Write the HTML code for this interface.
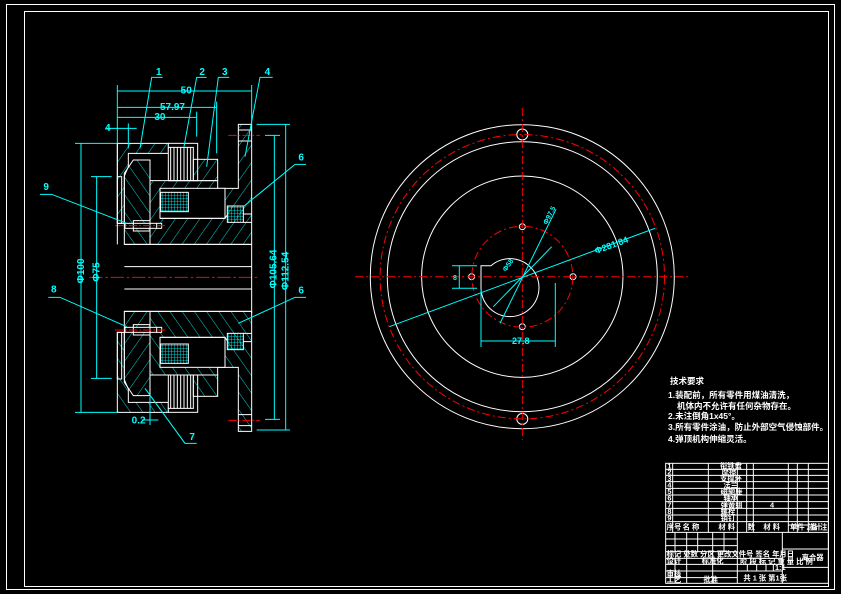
<!DOCTYPE html>
<html><head><meta charset="utf-8"><style>
html,body{margin:0;padding:0;background:#000;}
svg{display:block;}
text{font-family:"Liberation Sans","Noto Sans CJK SC",sans-serif;font-weight:bold;}
</style></head><body>
<svg width="841" height="594" viewBox="0 0 841 594" xmlns="http://www.w3.org/2000/svg">
<defs>
<pattern id="h" width="30" height="30" patternUnits="userSpaceOnUse" patternTransform="rotate(35)">
<line x1="0" y1="0" x2="0" y2="30" stroke="#0ff" stroke-width="2.5"/></pattern>
<pattern id="h2" width="30" height="30" patternUnits="userSpaceOnUse" patternTransform="rotate(-35)">
<line x1="0" y1="0" x2="0" y2="30" stroke="#0ff" stroke-width="2.5"/></pattern>
<pattern id="g" width="9" height="9" patternUnits="userSpaceOnUse">
<path d="M0 0H9M0 0V9" stroke="#0ff" stroke-width="2.5" fill="none"/></pattern>
</defs>
<rect width="841" height="594" fill="#000"/>
<rect x="6.5" y="4.5" width="828" height="585" fill="none" stroke="#fff" stroke-width="1"/>
<rect x="24.5" y="11.5" width="804" height="575" fill="none" stroke="#fff" stroke-width="1"/>

<!-- LEFT VIEW in zoom coords -->
<g transform="translate(30,60) scale(0.33333)" stroke-width="3" fill="none">
 <g id="half" stroke="#fff">
  <polygon points="262,250 415,250 415,280 295,280 295,320 283,348 283,490 262,490" fill="url(#h)"/>
  <polygon points="310,300 360,300 360,553 283,553 283,340" fill="url(#h2)"/>
  <rect x="415" y="250" width="88" height="112" fill="#000"/>
  <path d="M415 262H490V362H415M422 262V362M432 262V362M442 262V362M452 262V362M462 262V362M472 262V362M482 262V362" />
  <rect x="490" y="298" width="73" height="64" fill="url(#h)"/>
  <polygon points="360,362 563,362 563,385 625,385 625,193 665,193 665,553 360,553" fill="url(#h)"/>
  <rect x="390" y="385" width="195" height="90" fill="#000"/>
  <rect x="392" y="397" width="83" height="58" fill="url(#g)"/>
  <path d="M390 475H585L592 465"/>
  <rect x="592" y="438" width="48" height="49" fill="url(#g)"/>
  <path d="M640 462H665M640 487H665M625 210H665M625 243H665"/>
  <rect x="262" y="350" width="13" height="140"/>
  <rect x="285" y="490" width="110" height="15" fill="#000"/>
  <path d="M310 482H360V513H310Z M380 490V505"/>
  <path d="M283 553H665 M283 620H665" />
  <path d="M255 497H405 M595 226H690" stroke="#f00" stroke-dasharray="25,6,5,6"/>
 </g>
 <use href="#half" transform="translate(0,1307) scale(1,-1)"/>
 <path d="M178 652H690" stroke="#f00" stroke-dasharray="40,8,8,8"/>
 <path d="M262 250V553M665 553V760" stroke="#fff"/>
 <g stroke="#0ff">
  <path d="M398 52H365L330 265M530 52H500L462 260M598 52H565L530 320M728 52H690L645 290"/>
  <path d="M262 75V250M665 75V193M560 125V280M500 155V230M295 190V265"/>
  <path d="M262 93H665M262 142H560M262 172H500M230 205H320"/>
  <path d="M135 250H262M135 1057H262M153 250V1057M183 350H245M183 955H245M200 350V955"/>
  <path d="M705 226H750M705 1078H750M733 226V1078M680 193H780M680 1110H780M767 193V1110"/>
  <path d="M30 403H65L290 490M55 712H90L290 800M828 313H795L640 440M828 712H795L625 790M500 1150H465L345 985"/>
  <path d="M335 1080H385M360 1010V1095"/>
 </g>
 <g fill="#0ff" font-size="30">
  <text x="378" y="45">1</text><text x="508" y="45">2</text><text x="576" y="45">3</text><text x="704" y="45">4</text>
  <text x="452" y="100">50</text><text x="390" y="150">57.97</text><text x="373" y="180">30</text><text x="225" y="213">4</text>
  <text x="40" y="390">9</text><text x="63" y="698">8</text><text x="805" y="302">6</text><text x="805" y="700">6</text><text x="478" y="1140">7</text>
  <text x="305" y="1090">0.2</text>
  <text transform="translate(162,670) rotate(-90)">Φ100</text>
  <text transform="translate(209,665) rotate(-90)">Φ75</text>
  <text transform="translate(740,685) rotate(-90)">Φ105.64</text>
  <text transform="translate(775,690) rotate(-90)">Φ112.54</text>
 </g>
</g>

<!-- RIGHT VIEW -->
<g fill="none" stroke-width="1">
 <g stroke="#fff">
  <circle cx="522.3" cy="276.7" r="152"/>
  <circle cx="522.3" cy="276.7" r="135"/>
  <circle cx="522.3" cy="276.7" r="100.7"/>
  <path d="M481 265.7H491A29 29 0 1 1 481 288.3Z" fill="none"/>
  <circle cx="522.3" cy="134.5" r="5.5"/><circle cx="522.3" cy="418.9" r="5.5"/>
  <circle cx="522.3" cy="226.7" r="3"/><circle cx="522.3" cy="326.7" r="3"/>
  <circle cx="471.6" cy="276.7" r="3"/><circle cx="573" cy="276.7" r="3"/>
 </g>
 <g stroke="#f00" stroke-dasharray="8,3,2,3">
  <circle cx="522.3" cy="276.7" r="142.2"/>
  <circle cx="522.3" cy="276.7" r="50.5"/>
  <path d="M355 276.7H690M522.3 108V440"/>
 </g>
 <g stroke="#0ff">
  <path d="M389.3 326.7L655 228.3M493.3 306.7L551.7 246.7M500 323.3L556 209.3"/>
  <path d="M481 341H555.3M481 290V347M555.3 283V347M459.3 265.7V288.3M452 265.7H477M452 288.3H477"/>
 </g>
 <g fill="#0ff" font-size="9">
  <text x="512" y="344">27.8</text>
  <text x="453" y="280" font-size="7">8</text>
  <text transform="translate(596,254) rotate(-20)">Φ281.84</text>
  <text transform="translate(506,272) rotate(-55)" font-size="7">Φ58</text>
  <text transform="translate(547,225) rotate(-63)" font-size="7">Φ97.5</text>
 </g>
</g>

<!-- TECH TEXT -->
<g fill="#fff" font-size="8.5">
 <text x="670" y="384">技术要求</text>
 <text x="668" y="398">1.装配前，所有零件用煤油清洗，</text>
 <text x="677" y="409">机体内不允许有任何杂物存在。</text>
 <text x="668" y="419">2.未注倒角1x45°。</text>
 <text x="668" y="430">3.所有零件涂油，防止外部空气侵蚀部件。</text>
 <text x="668" y="442">4.弹顶机构伸缩灵活。</text>
</g>

<!-- TITLE BLOCK -->
<g transform="translate(660,370) scale(0.33333)" stroke="#fff" stroke-width="3" fill="none">
 <rect x="17" y="280" width="488" height="360"/>
 <path d="M17 298H505M17 316H505M17 335H505M17 355H505M17 375H505M17 395H505M17 415H505M17 435H505M17 455H505M385 465H445"/>
 <path d="M38 280V487M145 280V487M232 280V640M260 280V487M280 280V487M385 280V487M412 280V487M445 280V487M367 487V640"/>
 <path d="M17 487H505M17 507H232M17 527H232M17 545H232M17 565H367M17 583H232M17 603H367M17 623H232M367 537H505M367 592H505M232 583H367"/>
 <path d="M45 487V545M80 487V640M113 487V545M158 487V640M192 487V545M45 565V640M262 583V603M290 583V603M318 583V603M340 583V603M232 603H367"/>
 <g fill="#fff" stroke="none" font-size="22">
  <text x="22" y="296">1</text><text x="22" y="314">2</text><text x="22" y="333">3</text><text x="22" y="352">4</text><text x="22" y="372">5</text><text x="22" y="392">6</text><text x="22" y="412">7</text><text x="22" y="432">8</text><text x="22" y="452">9</text>
  <text x="180" y="296">衔铁盘</text><text x="185" y="314">摩擦</text><text x="180" y="333">支撑环</text><text x="190" y="352">法兰</text><text x="182" y="372">磁轭座</text><text x="190" y="392">轴承</text><text x="182" y="412">弹簧组</text><text x="182" y="432">螺栓</text><text x="182" y="452">销钉</text>
  <text x="330" y="412">4</text>
  <text x="20" y="478">序号</text><text x="68" y="478">名 称</text><text x="175" y="478">材 料</text><text x="263" y="478">数</text><text x="310" y="478">材 料</text><text x="390" y="478">单件 总计</text><text x="452" y="478">备 注</text>
  <text x="425" y="570">离合器</text>
  <text x="20" y="560">标记 处数 分区 更改文件号 签名 年月日</text>
  <text x="240" y="582">阶 段 标 记 重 量 比 例</text>
  <text x="20" y="580">设计</text><text x="20" y="618">审核</text><text x="20" y="636">工艺</text><text x="125" y="580">标准化</text><text x="130" y="636">批准</text>
  <text x="345" y="600">1:1</text>
  <text x="250" y="632">共 1 张 第1张</text>
 </g>
</g>
</svg>
</body></html>
